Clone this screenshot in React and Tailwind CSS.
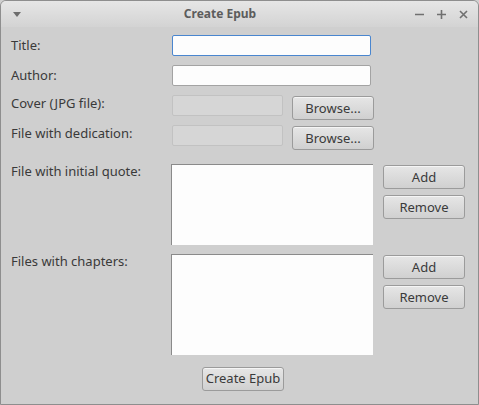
import React from 'react';

const font = { fontFamily: '"Noto Sans", "Open Sans", sans-serif' };

// Qt-style push button
const Button = ({ children, className = '' }) => (
  <button
    className={`h-[24px] w-[82px] rounded-[3px] border border-[#9b9b9b] bg-gradient-to-b from-[#e6e6e6] to-[#d0d0d0] text-[13px] leading-none text-[#3a3a3a] shadow-[inset_0_1px_0_rgba(255,255,255,0.6)] ${className}`}
  >
    {children}
  </button>
);

const Label = ({ children, className = '' }) => (
  <div className={`w-[161px] shrink-0 text-[13px] text-[#3a3a3a] ${className}`}>{children}</div>
);

const TextRow = ({ label, focused }) => (
  <div className="flex h-[30px] items-start">
    <Label className="leading-[20px]">{label}</Label>
    <input
      className={`h-[21px] w-[199px] rounded-[2px] border bg-[#fdfdfd] outline-none ${
        focused ? 'border-[#4a86cf]' : 'border-[#a3a3a3]'
      }`}
    />
  </div>
);

const FileRow = ({ label }) => (
  <div className="flex h-[30px] items-start">
    <Label className="mt-[-2px] leading-[20px]">{label}</Label>
    <input
      disabled
      className="h-[21px] w-[111px] rounded-[2px] border border-[#c2c2c2] bg-[#d6d6d6] outline-none"
    />
    <Button className="ml-[9px] mt-[1px]">Browse...</Button>
  </div>
);

const ListRow = ({ label, height }) => (
  <div className="flex items-start">
    <Label className="mt-[-3px] leading-[20px]">{label}</Label>
    <div
      className={`ml-[-1px] w-[202px] border-l border-t border-[#8a8a8a] bg-[#fdfdfd] ${height}`}
    />
    <div className="ml-[10px] mt-[1px] flex flex-col gap-[6px]">
      <Button>Add</Button>
      <Button>Remove</Button>
    </div>
  </div>
);

export default function App() {
  return (
    <div className="h-[405px] w-[479px] bg-[#cfcfcf]" style={font}>
      <div className="flex h-[405px] w-[479px] flex-col overflow-hidden rounded-t-[6px] border border-[#8e8e8e] bg-[#cfcfcf]">
        {/* title bar */}
        <div className="flex h-[26px] shrink-0 items-center bg-gradient-to-b from-[#e6e6e6] to-[#d3d3d3]">
          <div className="flex w-[30px] justify-center pl-[2px]">
            <svg width="8" height="5" viewBox="0 0 8 5">
              <path d="M0 0h8L4 5z" fill="#6d6d6d" />
            </svg>
          </div>
          <div className="flex-1 text-center text-[12px] font-bold text-[#5c5c5c]">Create Epub</div>
          <div className="flex items-center gap-[13px] pr-[10px] pl-[6px]">
            <svg width="9" height="9" viewBox="0 0 9 9">
              <path d="M0 4.5h9" stroke="#707070" strokeWidth="1.6" />
            </svg>
            <svg width="9" height="9" viewBox="0 0 9 9">
              <path d="M0 4.5h9M4.5 0v9" stroke="#707070" strokeWidth="1.6" />
            </svg>
            <svg width="9" height="9" viewBox="0 0 9 9">
              <path d="M1 1l7 7M8 1l-7 7" stroke="#707070" strokeWidth="1.6" />
            </svg>
          </div>
        </div>

        {/* form */}
        <div className="flex flex-col pl-[10px] pt-[8px]">
          <TextRow label="Title:" focused />
          <TextRow label="Author:" />
          <FileRow label="Cover (JPG file):" />
          <FileRow label="File with dedication:" />
          <div className="mt-[9px] flex flex-col gap-[9px]">
            <ListRow label="File with initial quote:" height="h-[81px]" />
            <ListRow label="Files with chapters:" height="h-[101px]" />
          </div>
          <div className="mt-[10px] pl-[191px]">
            <Button>Create Epub</Button>
          </div>
        </div>
      </div>
    </div>
  );
}
